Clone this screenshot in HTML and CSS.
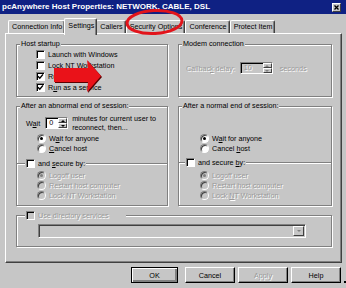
FILE: index.html
```html
<!DOCTYPE html>
<html lang="en">
<head>
    <meta charset="UTF-8">
    <meta name="viewport" content="width=device-width, initial-scale=1.0">
    <title>pcAnywhere Host Properties</title>
    <link rel="stylesheet" href="styles.css">
</head>
<body>
    <div class="window">
        <div class="titlebar">
            <span class="title">pcAnywhere Host Properties: NETWORK, CABLE, DSL</span>
            <span class="close">
                <svg width="5" height="5" viewBox="0 0 5 5"><path d="M0.5 0.5 L4.5 4.5 M4.5 0.5 L0.5 4.5" stroke="#000" stroke-width="1.3"/></svg>
            </span>
        </div>

        <div class="tabs">
            <span class="tab">Connection Info</span>
            <span class="tab active">Settings</span>
            <span class="tab">Callers</span>
            <span class="tab">Security Options</span>
            <span class="tab">Conference</span>
            <span class="tab">Protect Item</span>
        </div>

        <div class="panel">
            <fieldset class="group startup">
                <legend>Host startup</legend>
                <div class="list">
                    <label class="check"><span class="box"></span><span>Launch with Windows</span></label>
                    <label class="check"><span class="box"></span><span>Lock NT Workstation</span></label>
                    <label class="check"><span class="box on"><svg width="7" height="7" viewBox="0 0 7 7"><path d="M1 3.2 L2.8 5.2 L6 1.4" fill="none" stroke="#000" stroke-width="1.4"/></svg></span><span>Run minimized</span></label>
                    <label class="check"><span class="box on"><svg width="7" height="7" viewBox="0 0 7 7"><path d="M1 3.2 L2.8 5.2 L6 1.4" fill="none" stroke="#000" stroke-width="1.4"/></svg></span><span>R<u>u</u>n as a service</span></label>
                </div>
            </fieldset>

            <fieldset class="group modem">
                <legend>Modem connection</legend>
                <div class="field off">
                    <span>Callbac<u>k</u> delay:</span>
                    <span class="spin"><span class="val">10</span><span class="arrows"><span class="up"></span><span class="down"></span></span></span>
                    <span class="unit">seconds</span>
                </div>
            </fieldset>

            <fieldset class="group session abnormal">
                <legend>After an abnormal end of session:</legend>
                <div class="wait">
                    <span>W<u>a</u>it</span>
                    <span class="spin"><span class="val">0</span><span class="arrows"><span class="up"></span><span class="down"></span></span></span>
                    <span class="note">minutes for current user to<br>reconnect, then...</span>
                </div>
                <div class="list options">
                    <label class="radio"><span class="dot on"></span><span>W<u>a</u>it for anyone</span></label>
                    <label class="radio"><span class="dot"></span><span><u>C</u>ancel host</span></label>
                </div>
                <fieldset class="sub">
                    <legend><label class="check"><span class="box"></span><span>and <u>s</u>ecure by:</span></label></legend>
                    <div class="list options off">
                        <label class="radio"><span class="dot on"></span><span>Logoff user</span></label>
                        <label class="radio"><span class="dot"></span><span>Restart host computer</span></label>
                        <label class="radio"><span class="dot"></span><span>Lock NT Workstation</span></label>
                    </div>
                </fieldset>
            </fieldset>

            <fieldset class="group session normal">
                <legend>After a normal end of session:</legend>
                <div class="list options">
                    <label class="radio"><span class="dot on"></span><span>W<u>a</u>it for anyone</span></label>
                    <label class="radio"><span class="dot"></span><span>Cancel <u>h</u>ost</span></label>
                </div>
                <fieldset class="sub">
                    <legend><label class="check"><span class="box"></span><span>and secure <u>b</u>y:</span></label></legend>
                    <div class="list options off">
                        <label class="radio"><span class="dot on"></span><span>Logoff user</span></label>
                        <label class="radio"><span class="dot"></span><span>Restart host computer</span></label>
                        <label class="radio"><span class="dot"></span><span>Lock <u>N</u>T Workstation</span></label>
                    </div>
                </fieldset>
            </fieldset>

            <fieldset class="group directory">
                <legend><label class="check off"><span class="box"></span><span>Use directory services</span></label></legend>
                <div class="combo"><span class="drop"></span></div>
            </fieldset>
        </div>

        <div class="buttons">
            <span class="btn default">OK</span>
            <span class="btn">Cancel</span>
            <span class="btn off">Apply</span>
            <span class="btn">Help</span>
        </div>

        <svg class="ring" width="62" height="30" viewBox="0 0 62 30">
            <ellipse cx="30.5" cy="15" rx="27.5" ry="11.5" fill="none" stroke="#e2141b" stroke-width="3" transform="rotate(-3 30.5 15)"/>
        </svg>
        <svg class="arrow" width="56" height="40" viewBox="0 0 56 40">
            <polygon points="5,12 39,12 38,4 52,20 38,36 39,26 5,26" fill="#5a0000"/>
            <polygon points="4,11 38,11 37,3 51,19 37,35 38,25 4,25" fill="#ea1219"/>
        </svg>
        <span class="speck"></span>
    </div>
</body>
</html>
```

FILE: styles.css
```css
* {
    box-sizing: border-box;
}
body {
    margin: 0;
    background-color: #c6c6c6;
    font-family: "Liberation Sans", Arial, sans-serif;
    font-size: 7.2px;
    color: #000;
}
.window {
    position: relative;
    width: 346px;
    height: 288px;
    overflow: hidden;
    background-color: #c6c6c6;
}

/* title bar */
.titlebar {
    display: flex;
    align-items: center;
    justify-content: space-between;
    height: 14px;
    padding: 0 5px 0 2px;
    background-color: #0f2183;
    color: #fff;
}
.title {
    font-size: 8px;
    font-weight: bold;
    line-height: 14px;
    white-space: nowrap;
}
.close {
    display: flex;
    align-items: center;
    justify-content: center;
    width: 9px;
    height: 9px;
    background-color: #c6c6c6;
    border: 1px solid;
    border-color: #fff #404040 #404040 #fff;
}
.close svg {
    display: block;
}

/* tabs */
.tabs {
    display: flex;
    align-items: flex-end;
    height: 19px;
    padding-left: 8px;
}
.tab {
    height: 13px;
    line-height: 11px;
    padding: 0 2px 0 3px;
    border: 1px solid #fff;
    border-right-color: #404040;
    border-bottom: none;
    border-radius: 2px 2px 0 0;
    box-shadow: inset -1px 0 0 #808080;
    white-space: nowrap;
}
.tab.active {
    position: relative;
    z-index: 1;
    height: 17px;
    margin: 0 -1px -2px -1px;
    padding: 0 2px 0 3px;
    line-height: 13px;
    background-color: #c6c6c6;
}

/* property page */
.panel {
    display: grid;
    grid-template-columns: 152px 154px;
    grid-template-rows: 58px 105px 37px;
    column-gap: 10px;
    row-gap: 4px;
    width: 337px;
    height: 230px;
    margin-left: 5px;
    padding: 5px 0 0 10px;
    border: 1px solid;
    border-color: #fff #404040 #404040 #fff;
    box-shadow: inset -1px -1px 0 #808080;
}
.group {
    margin: 0;
    padding: 0;
    min-width: 0;
    border: 1px solid #808080;
    box-shadow: inset 1px 1px 0 #fff, 1px 1px 0 #fff;
}
.group legend,
.sub legend {
    margin-left: 3px;
    padding: 0 1px;
    line-height: 10px;
    background-color: #c6c6c6;
    white-space: nowrap;
}
.directory {
    grid-column: 1 / 3;
}

.list {
    display: flex;
    flex-direction: column;
}
.startup .list {
    padding-left: 19px;
}
.check,
.radio {
    display: flex;
    align-items: center;
    gap: 3px;
    height: 11px;
    white-space: nowrap;
}
.options .radio {
    height: 10px;
}
.off {
    color: #9a9a9a;
    text-shadow: 1px 1px 0 #fff;
}

.box {
    flex: none;
    display: flex;
    align-items: center;
    justify-content: center;
    width: 9px;
    height: 9px;
    background-color: #fff;
    border: 1px solid;
    border-color: #808080 #fff #fff #808080;
    box-shadow: inset 1px 1px 0 #000;
}
.off .box {
    background-color: #c6c6c6;
}
.dot {
    flex: none;
    display: flex;
    align-items: center;
    justify-content: center;
    width: 9px;
    height: 9px;
    border-radius: 50%;
    background-color: #fff;
    border: 1px solid;
    border-color: #808080 #fff #fff #808080;
    box-shadow: inset 1px 1px 0 #404040;
}
.dot.on::after {
    content: "";
    width: 3px;
    height: 3px;
    border-radius: 50%;
    background-color: #000;
}
.off .dot {
    background-color: #c6c6c6;
}
.off .dot.on::after {
    background-color: #808080;
}

/* spin boxes */
.spin {
    flex: none;
    display: flex;
    height: 12px;
    background-color: #fff;
    border: 1px solid;
    border-color: #808080 #fff #fff #808080;
    box-shadow: inset 1px 1px 0 #000;
}
.spin .val {
    flex: 1;
    padding-left: 3px;
    line-height: 10px;
}
.spin .arrows {
    display: flex;
    flex-direction: column;
    width: 9px;
}
.spin .arrows span {
    flex: 1;
    display: flex;
    align-items: center;
    justify-content: center;
    background-color: #c6c6c6;
    border: 1px solid;
    border-color: #fff #404040 #404040 #fff;
}
.spin .up::after {
    content: "";
    border-left: 2px solid transparent;
    border-right: 2px solid transparent;
    border-bottom: 2px solid #000;
}
.spin .down::after {
    content: "";
    border-left: 2px solid transparent;
    border-right: 2px solid transparent;
    border-top: 2px solid #000;
}
.off .spin {
    background-color: #c6c6c6;
}
.off .spin .up::after {
    border-bottom-color: #808080;
}
.off .spin .down::after {
    border-top-color: #808080;
}

.modem .field {
    display: flex;
    align-items: center;
    gap: 5px;
    height: 12px;
    margin: 13px 0 0 7px;
}
.modem .spin {
    width: 33px;
}
.modem .unit {
    margin-left: 2px;
}

.wait {
    display: flex;
    align-items: center;
    gap: 4px;
    margin: 3px 0 0 9px;
}
.wait .spin {
    width: 23px;
    margin-left: 1px;
}
.wait .note {
    line-height: 9px;
}
.abnormal .options {
    margin-top: 1px;
    padding-left: 20px;
}
.normal .options {
    margin-top: 22px;
    padding-left: 21px;
}
.sub {
    margin: 5px 0 0;
    padding: 0;
    min-width: 0;
    border: none;
    border-top: 1px solid #808080;
    box-shadow: inset 0 1px 0 #fff;
}
.sub legend {
    margin-left: 8px;
}
.normal .sub {
    margin-top: 4px;
}
.normal .sub legend {
    margin-left: 6px;
}
.sub .options {
    margin-top: 1px;
}
.normal .sub .options {
    margin-top: 2px;
}

.directory legend {
    margin-left: 8px;
    padding-right: 17px;
}
.combo {
    display: flex;
    justify-content: flex-end;
    width: 268px;
    height: 14px;
    margin: 3px 0 0 21px;
    padding: 1px 1px 1px 2px;
    border: 1px solid;
    border-color: #808080 #fff #fff #808080;
    box-shadow: inset 1px 1px 0 #404040;
}
.combo .drop {
    display: flex;
    align-items: center;
    justify-content: center;
    width: 11px;
    background-color: #c6c6c6;
    border: 1px solid;
    border-color: #fff #404040 #404040 #fff;
}
.combo .drop::after {
    content: "";
    border-left: 2px solid transparent;
    border-right: 2px solid transparent;
    border-top: 2px solid #808080;
}

/* dialog buttons */
.buttons {
    display: flex;
    justify-content: flex-end;
    gap: 3px;
    padding: 4px 5px 0 0;
}
.btn {
    display: flex;
    align-items: center;
    justify-content: center;
    width: 50px;
    height: 16px;
    border: 1px solid;
    border-color: #fff #000 #000 #fff;
    box-shadow: inset -1px -1px 0 #808080;
}
.btn.default {
    width: 47px;
    margin-right: 4px;
    border-color: #000;
    box-shadow: inset 1px 1px 0 #fff, inset -2px -2px 0 #808080;
}

/* red markup drawn over the screenshot */
.ring {
    position: absolute;
    left: 124px;
    top: 7px;
}
.arrow {
    position: absolute;
    left: 50px;
    top: 57px;
}
.speck {
    position: absolute;
    left: 344px;
    top: 281px;
    width: 2px;
    height: 2px;
    background-color: #000;
}
```
